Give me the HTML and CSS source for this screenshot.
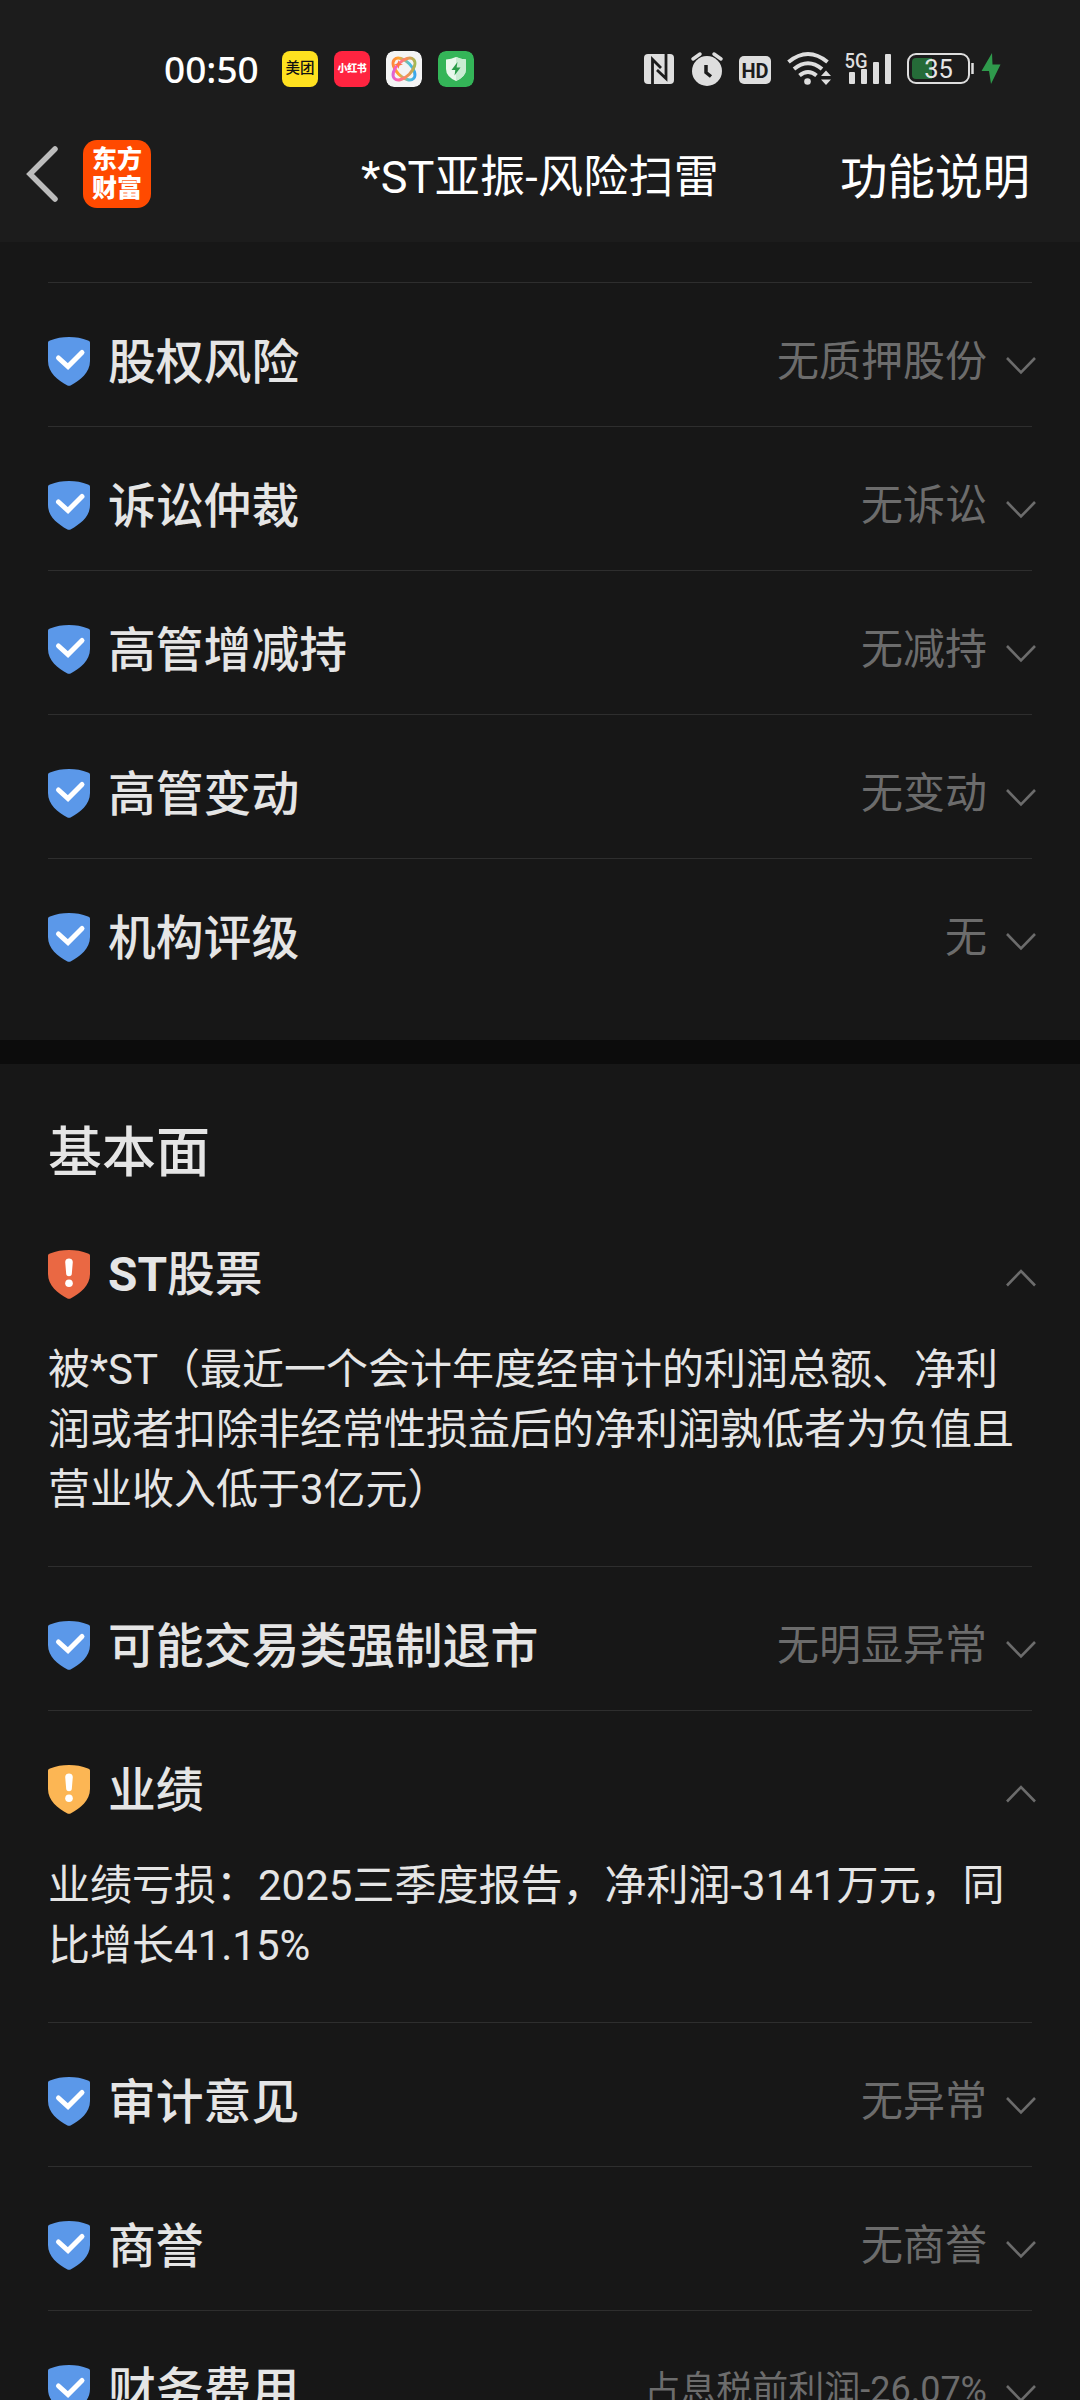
FILE: index.html
```html
<!DOCTYPE html>
<html lang="zh-CN">
<head>
<meta charset="utf-8">
<title>*ST亚振-风险扫雷</title>
<link rel="stylesheet" href="styles.css">
</head>
<body>
<svg class="defs" width="0" height="0" aria-hidden="true">
  <symbol id="shield" viewBox="0 0 42 49"><path d="M0 5.5Q0 4 2 3.4Q11 0 21 0T40 3.4Q42 4 42 5.5V24C42 36 32 43 23 48.3Q21 49.300 19 48.300C10 43 0 36 0 24Z"/></symbol>
  <symbol id="check" viewBox="0 0 42 49"><use href="#shield"/><path d="M10.500 21L20 29.500L34 15.500" fill="none" stroke="#fff" stroke-width="5" stroke-linecap="round"/></symbol>
  <symbol id="warn" viewBox="0 0 42 49"><use href="#shield"/><path d="M17.200 12C17.200 7.400 24.800 7.400 24.800 12L23.800 24C23.600 27 18.400 27 18.200 24Z" fill="#fff"/><circle cx="21" cy="33.200" r="3.800" fill="#fff"/></symbol>
  <symbol id="down" viewBox="0 0 32 20"><path d="M2 2L16 16.500L30 2" fill="none" stroke="#6c6c6c" stroke-width="2.600"/></symbol>
  <symbol id="up" viewBox="0 0 32 20"><path d="M2 17.500L16 3L30 17.500" fill="none" stroke="#6c6c6c" stroke-width="2.600"/></symbol>
</svg>
<header class="top">
  <div class="status">
    <span class="clock">00:50</span>
    <div class="apps">
      <span class="app meituan">美团</span>
      <span class="app red">小红书</span>
      <svg class="app" viewBox="0 0 36 36"><defs><linearGradient id="rb" gradientUnits="userSpaceOnUse" x1="6" y1="6" x2="30" y2="30"><stop offset="0" stop-color="#ff6a4d"/><stop offset=".35" stop-color="#ffa62e"/><stop offset=".65" stop-color="#4fc3d6"/><stop offset="1" stop-color="#2a8cff"/></linearGradient><linearGradient id="rb2" gradientUnits="userSpaceOnUse" x1="30" y1="6" x2="6" y2="30"><stop offset="0" stop-color="#6fd44e"/><stop offset=".45" stop-color="#ff8a5a"/><stop offset=".7" stop-color="#ff5fb0"/><stop offset="1" stop-color="#b46bff"/></linearGradient></defs><rect width="36" height="36" rx="8" fill="#f4f4f4"/><g fill="none" stroke-width="3"><ellipse cx="18" cy="18" rx="7.500" ry="13.500" transform="rotate(-45 18 18)" stroke="url(#rb)"/><ellipse cx="18" cy="18" rx="7.500" ry="13.500" transform="rotate(45 18 18)" stroke="url(#rb2)"/></g><path d="M12.500 9l1 3.500 3.500 1-3.500 1-1 3.500-1-3.500-3.500-1 3.500-1z" fill="#ff7a3c"/></svg>
      <svg class="app" viewBox="0 0 36 36"><rect width="36" height="36" rx="8" fill="#34b558"/><path d="M18 6Q23 8 28 8.500V18Q28 25.500 18 30Q8 25.500 8 18V8.500Q13 8 18 6Z" fill="#e9f8ec"/><path d="M18 6Q23 8 28 8.500V18Q28 25.500 18 30Z" fill="#c9ecd2"/><path d="M19.500 11L13.500 19H17.300L16.500 24.500L22.500 16.500H18.600Z" fill="#2a9c49"/></svg>
    </div>
    <svg class="sys" viewBox="0 0 362 36">
      <g fill="#dedede">
        <rect x="0" y="3" width="30" height="30" rx="4"/>
        <path d="M8.500 33V8.500L17 17M22 3V27.500L13 19" fill="none" stroke="#1c1c1c" stroke-width="2.800"/>
        <circle cx="63" cy="20" r="15"/>
        <path d="M49 8L56 3M70 3L77 8" stroke="#dedede" stroke-width="3.500" stroke-linecap="round"/>
        <path d="M62 14V21.500L67 25.500" fill="none" stroke="#1c1c1c" stroke-width="3.500"/>
        <rect x="95" y="5" width="32" height="28" rx="5"/>
        <text x="111" y="26.800" class="hd">HD</text>
        <g fill="none" stroke="#dedede" stroke-width="4"><path d="M144.500 11Q164 -5 183.500 11"/><path d="M150 18Q164 6.500 178 18"/><path d="M155.500 24.500Q164 17.500 172.500 24.500"/></g>
        <circle cx="163.500" cy="30.500" r="3.300"/>
        <path d="M177 25L182 19.500L187 25ZM177 28.500L182 34L187 28.500Z"/>
        <text x="200.500" y="16.500" class="g5" textLength="23" lengthAdjust="spacingAndGlyphs">5G</text>
        <rect x="205" y="21" width="6" height="12" rx="1"/><rect x="217" y="18" width="6" height="15" rx="1"/><rect x="229" y="11" width="6" height="22" rx="1"/><rect x="241" y="3" width="6" height="30" rx="1"/>
      </g>
      <rect x="264" y="3" width="61" height="29" rx="8" fill="none" stroke="#dedede" stroke-width="2"/>
      <path d="M272 7H288V28H272Q268 28 268 24V11Q268 7 272 7Z" fill="#256b38"/>
      <path d="M328.500 12V23" stroke="#dedede" stroke-width="2.500"/>
      <text x="294.500" y="26.500" class="pct">35</text>
      <path d="M348 2L337.500 20H345L347 33L356.500 13.500H348.500Z" fill="#2f9a4c"/>
    </svg>
  </div>
  <nav class="nav">
    <svg class="back" viewBox="0 0 36 60"><path d="M31 5L6 30L31 55" fill="none" stroke="#bcbcbc" stroke-width="5.500" stroke-linecap="round"/></svg>
    <span class="logo">东方<br>财富</span>
    <h1 class="title">*ST亚振-风险扫雷</h1>
    <span class="link">功能说明</span>
  </nav>
</header>
<main>
  <section class="list first">
    <div class="row"><svg class="ico blue"><use href="#check"/></svg><span class="name">股权风险</span><span class="val">无质押股份</span><svg class="chev"><use href="#down"/></svg></div>
    <div class="row"><svg class="ico blue"><use href="#check"/></svg><span class="name">诉讼仲裁</span><span class="val">无诉讼</span><svg class="chev"><use href="#down"/></svg></div>
    <div class="row"><svg class="ico blue"><use href="#check"/></svg><span class="name">高管增减持</span><span class="val">无减持</span><svg class="chev"><use href="#down"/></svg></div>
    <div class="row"><svg class="ico blue"><use href="#check"/></svg><span class="name">高管变动</span><span class="val">无变动</span><svg class="chev"><use href="#down"/></svg></div>
    <div class="row"><svg class="ico blue"><use href="#check"/></svg><span class="name">机构评级</span><span class="val">无</span><svg class="chev"><use href="#down"/></svg></div>
  </section>
  <section class="list second">
    <h2 class="heading">基本面</h2>
    <div class="row lead"><svg class="ico orange"><use href="#warn"/></svg><span class="name"><b>ST</b>股票</span><span class="val"></span><svg class="chev"><use href="#up"/></svg></div>
    <p class="detail">被*ST（最近一个会计年度经审计的利润总额、净利<br>润或者扣除非经常性损益后的净利润孰低者为负值且<br>营业收入低于3亿元）</p>
    <div class="row"><svg class="ico blue"><use href="#check"/></svg><span class="name">可能交易类强制退市</span><span class="val">无明显异常</span><svg class="chev"><use href="#down"/></svg></div>
    <div class="row"><svg class="ico yellow"><use href="#warn"/></svg><span class="name">业绩</span><span class="val"></span><svg class="chev"><use href="#up"/></svg></div>
    <p class="detail">业绩亏损：2025三季度报告，净利润-3141万元，同<br>比增长41.15%</p>
    <div class="row"><svg class="ico blue"><use href="#check"/></svg><span class="name">审计意见</span><span class="val">无异常</span><svg class="chev"><use href="#down"/></svg></div>
    <div class="row"><svg class="ico blue"><use href="#check"/></svg><span class="name">商誉</span><span class="val">无商誉</span><svg class="chev"><use href="#down"/></svg></div>
    <div class="row"><svg class="ico blue"><use href="#check"/></svg><span class="name">财务费用</span><span class="val small">占息税前利润-26.07%</span><svg class="chev"><use href="#down"/></svg></div>
  </section>
</main>
</body>
</html>
```
FILE: styles.css
```css
* { box-sizing: border-box; }
html, body { height: 2400px; overflow: hidden; }
body {
  margin: 0;
  width: 1080px;
  background: #171717;
  color: #e5e5e5;
  font-family: Roboto, "Noto Sans CJK SC", sans-serif;
  text-spacing-trim: space-all;
}
h1, h2, p { margin: 0; }
svg { display: block; flex: none; }
.defs { display: none; }

.top { height: 242px; background: #1c1c1c; }
.status { height: 106px; padding: 31px 74px 0 164px; display: flex; align-items: center; }
.clock {
  width: 118px;
  font: 500 37px/72px "Noto Sans", sans-serif;
  color: #fff;
}
.apps { display: flex; gap: 16px; }
.app {
  width: 36px; height: 36px; border-radius: 8px;
  line-height: 36px; text-align: center; white-space: nowrap;
}
.meituan { background: #ffe11f; color: #111; font-weight: 500; font-size: 14.500px; }
.red { background: #ff2440; color: #fff; font-weight: 900; font-size: 10px; letter-spacing: -.3px; }
.sys { width: 362px; height: 36px; margin-left: auto; }
.hd { font: 700 20px Roboto, sans-serif; fill: #1c1c1c; text-anchor: middle; }
.g5 { font: 500 20px Roboto, sans-serif; }
.pct { font: 400 25.500px Roboto, sans-serif; fill: #e6e6e6; text-anchor: middle; }

.nav { height: 136px; padding: 0 50px 0 24px; display: flex; align-items: center; }
.back { width: 36px; height: 60px; }
.logo {
  width: 68px; height: 68px; margin-left: 23px; padding-top: 5px;
  border-radius: 14px; background: #ff4a00; color: #fff;
  font-size: 25px; font-weight: 900; line-height: 29px; text-align: center;
}
.title { margin-left: 210px; padding-top: 7px; font-size: 45px; font-weight: 400; line-height: 60px; letter-spacing: .25px; color: #fff; white-space: nowrap; }
.link { margin-left: auto; padding-top: 7px; font-size: 47.500px; line-height: 60px; color: #fff; }

.list { padding: 0 48px; }
.first { padding-top: 40px; height: 798px; }
.second { border-top: 24px solid #0c0c0c; }
.heading { padding-top: 58px; font-size: 54px; font-weight: 500; line-height: 64px; }
.row { height: 144px; padding-top: 14px; border-top: 1px solid #2e2e2e; display: flex; align-items: center; }
.lead { height: 136px; margin-top: 16px; border: 0; padding: 8px 0 0; }
.ico { width: 42px; height: 49px; margin-right: 18px; }
.blue { fill: #5b98e9; }
.orange { fill: #ea6843; }
.yellow { fill: #fcb654; }
.name { padding-top: 2px; font-size: 47.800px; font-weight: 500; line-height: 72px; white-space: nowrap; }
.name b { font-weight: 700; }
.val { margin-left: auto; font-size: 42px; line-height: 60px; color: #6c6c6c; white-space: nowrap; }
.small { font-size: 36px; }
.chev { width: 32px; height: 20px; margin: 8px -5px 0 18px; }
.detail { padding: 2px 0 46px; font-size: 42px; line-height: 60px; white-space: nowrap; }
```
